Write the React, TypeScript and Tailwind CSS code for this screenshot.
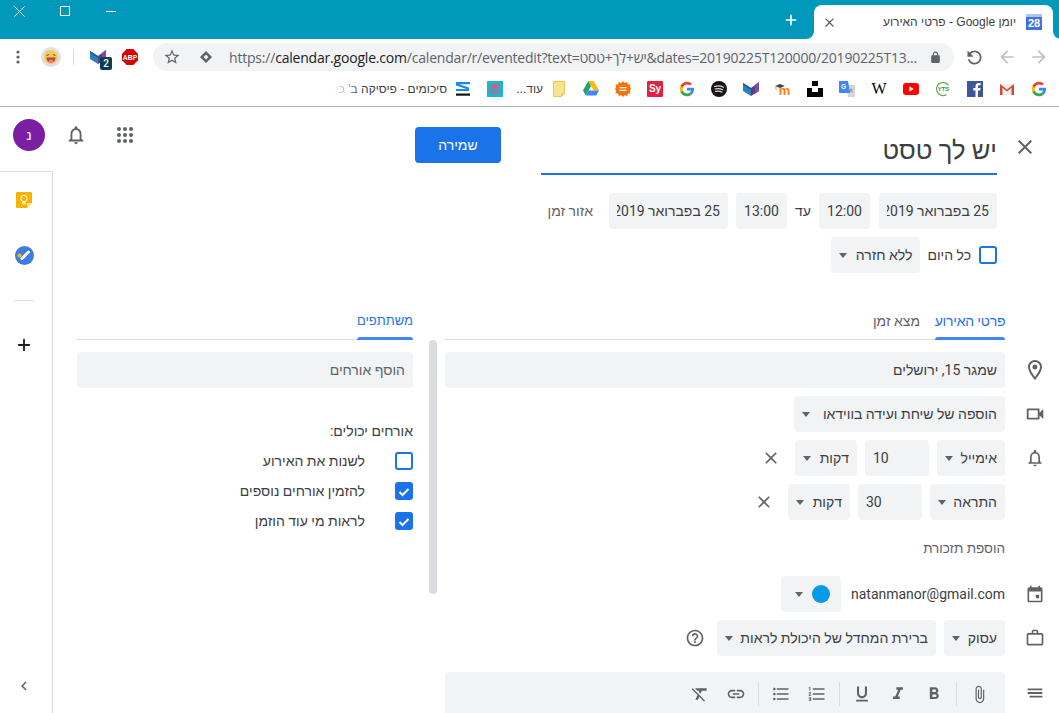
import React from "react";
import { Plus } from "lucide-react";

const P = {
  close: "M19 6.41L17.59 5 12 10.59 6.41 5 5 6.41 10.59 12 5 17.59 6.41 19 12 13.41 17.59 19 19 17.59 13.41 12z",
  place: "M12 2C8.13 2 5 5.13 5 9c0 5.25 7 13 7 13s7-7.75 7-13c0-3.87-3.13-7-7-7zM7 9c0-2.76 2.24-5 5-5s5 2.24 5 5c0 2.88-2.88 7.19-5 9.88C9.92 16.21 7 11.85 7 9zM12 6.5a2.5 2.5 0 1 0 0 5 2.5 2.5 0 0 0 0-5z",
  video: "M15 8v8H5V8h10m1-2H4c-.55 0-1 .45-1 1v10c0 .55.45 1 1 1h12c.55 0 1-.45 1-1v-3.5l4 4v-11l-4 4V7c0-.55-.45-1-1-1z",
  bell: "M12 22c1.1 0 2-.9 2-2h-4c0 1.1.89 2 2 2zm6-6v-5c0-3.07-1.64-5.64-4.5-6.32V4c0-.83-.67-1.5-1.5-1.5s-1.5.67-1.5 1.5v.68C7.63 5.36 6 7.92 6 11v5l-2 2v1h16v-1l-2-2zm-2 1H8v-6c0-2.48 1.51-4.5 4-4.5s4 2.02 4 4.5v6z",
  event: "M19 4h-1V2h-2v2H8V2H6v2H5c-1.1 0-2 .9-2 2v14c0 1.1.9 2 2 2h14c1.1 0 2-.9 2-2V6c0-1.1-.9-2-2-2zm0 16H5V9h14v11zM13 13h4v4h-4z",
  work: "M20 6h-4V4c0-1.11-.89-2-2-2h-4c-1.11 0-2 .89-2 2v2H4c-1.11 0-1.99.89-1.99 2L2 19c0 1.11.89 2 2 2h16c1.11 0 2-.89 2-2V8c0-1.11-.89-2-2-2zm-6 0h-4V4h4v2zm6 13H4V8h16v11z",
  notes: "M4 7h16v2H4zM4 11h16v2H4zM6 15h14v2H6z",
  attach: "M16.5 6v11.5c0 2.21-1.79 4-4 4s-4-1.79-4-4V5c0-1.38 1.12-2.5 2.5-2.5s2.5 1.12 2.5 2.5v10.5c0 .55-.45 1-1 1s-1-.45-1-1V6H10v9.5c0 1.38 1.12 2.5 2.5 2.5s2.5-1.12 2.5-2.5V5c0-2.21-1.79-4-4-4S7 2.79 7 5v12.5c0 3.04 2.46 5.5 5.5 5.5s5.5-2.46 5.5-5.5V6h-1.5z",
  bold: "M15.6 10.79c.97-.67 1.65-1.77 1.65-2.79 0-2.26-1.75-4-4-4H7v14h7.04c2.09 0 3.71-1.7 3.71-3.79 0-1.52-.86-2.82-2.15-3.42zM10 6.5h3c.83 0 1.5.67 1.5 1.5s-.67 1.5-1.5 1.5h-3v-3zm3.5 9H10v-3h3.5c.83 0 1.5.67 1.5 1.5s-.67 1.5-1.5 1.5z",
  italic: "M10 4v3h2.21l-3.42 8H6v3h8v-3h-2.21l3.42-8H18V4z",
  underline: "M12 17c3.31 0 6-2.69 6-6V3h-2.5v8c0 1.93-1.57 3.5-3.5 3.5S8.5 12.93 8.5 11V3H6v8c0 3.31 2.69 6 6 6zm-7 2v2h14v-2H5z",
  numbered: "M2 17h2v.5H3v1h1v.5H2v1h3v-4H2v1zm1-9h1V4H2v1h1v3zm-1 3h1.8L2 13.1v.9h3v-1H3.2L5 10.9V10H2v1zm5-6v2h14V5H7zm0 14h14v-2H7v2zm0-6h14v-2H7v2z",
  bulleted: "M4 10.5c-.83 0-1.5.67-1.5 1.5s.67 1.5 1.5 1.5 1.5-.67 1.5-1.5-.67-1.5-1.5-1.5zm0-6c-.83 0-1.5.67-1.5 1.5S3.17 7.5 4 7.5 5.5 6.83 5.5 6 4.83 4.5 4 4.5zm0 12c-.83 0-1.5.68-1.5 1.5s.68 1.5 1.5 1.5 1.5-.68 1.5-1.5-.67-1.5-1.5-1.5zM7 19h14v-2H7v2zm0-6h14v-2H7v2zm0-8v2h14V5H7z",
  link: "M3.9 12c0-1.71 1.39-3.1 3.1-3.1h4V7H7c-2.76 0-5 2.24-5 5s2.24 5 5 5h4v-1.9H7c-1.71 0-3.1-1.39-3.1-3.1zM8 13h8v-2H8v2zm9-6h-4v1.9h4c1.71 0 3.1 1.39 3.1 3.1s-1.39 3.1-3.1 3.1h-4V17h4c2.76 0 5-2.24 5-5s-2.24-5-5-5z",
  clear: "M3.27 5L2 6.27l6.97 6.97L6.5 19h3l1.57-3.66L16.73 21 18 19.73 3.55 5.27 3.27 5zM6 5v.18L8.82 8h2.4l-.72 1.68 2.1 2.1L14.21 8H20V5H6z",
  help: "M11 18h2v-2h-2v2zm1-16C6.48 2 2 6.48 2 12s4.48 10 10 10 10-4.48 10-10S17.52 2 12 2zm0 18c-4.41 0-8-3.59-8-8s3.59-8 8-8 8 3.59 8 8-3.59 8-8 8zm0-14c-2.21 0-4 1.79-4 4h2c0-1.1.9-2 2-2s2 .9 2 2c0 2-3 1.75-3 5h2c0-2.25 3-2.5 3-5 0-2.21-1.79-4-4-4z",
  reload: "M17.65 6.35C16.2 4.9 14.21 4 12 4c-4.42 0-7.99 3.58-7.99 8s3.57 8 7.99 8c3.73 0 6.84-2.55 7.73-6h-2.08c-.82 2.33-3.04 4-5.65 4-3.31 0-6-2.69-6-6s2.69-6 6-6c1.66 0 3.14.69 4.22 1.78L13 11h7V4l-2.35 2.35z",
  arrow: "M20 11H7.83l5.59-5.59L12 4l-8 8 8 8 1.41-1.41L7.83 13H20v-2z",
  star: "M22 9.24l-7.19-.62L12 2 9.19 8.63 2 9.24l5.46 4.73L5.82 21 12 17.27 18.18 21l-1.63-7.03L22 9.24zM12 15.4l-3.76 2.27 1-4.28-3.32-2.88 4.38-.38L12 6.1l1.71 4.04 4.38.38-3.32 2.88 1 4.28L12 15.4z",
  lock: "M18 8h-1V6c0-2.76-2.24-5-5-5S7 3.24 7 6v2H6c-1.1 0-2 .9-2 2v10c0 1.1.9 2 2 2h12c1.1 0 2-.9 2-2V10c0-1.1-.9-2-2-2zM9 6c0-1.66 1.34-3 3-3s3 1.34 3 3v2H9V6z",
  chevron: "M15.41 7.41L14 6l-6 6 6 6 1.41-1.41L10.83 12z",
};

const Ic = ({ d, size = 24, className = "" }: { d: string; size?: number; className?: string }) => (
  <svg width={size} height={size} viewBox="0 0 24 24" className={`shrink-0 fill-current ${className}`}>
    <path d={d} />
  </svg>
);

const Caret = () => <span className="block h-0 w-0 shrink-0 border-x-[4px] border-t-[5px] border-x-transparent border-t-[#5f6368]" />;

const Select = ({ label, w }: { label: string; w: string }) => (
  <div className={`flex h-9 items-center justify-between rounded bg-[#f1f3f4] px-2 text-sm text-[#3c4043] ${w}`}>
    <span className="whitespace-nowrap">{label}</span>
    <Caret />
  </div>
);

const Chip = ({ label, w }: { label: string; w: string }) => (
  <div className={`flex h-9 items-center rounded bg-[#f1f3f4] px-2 text-sm text-[#3c4043] ${w}`}>
    <span className="overflow-hidden whitespace-nowrap">{label}</span>
  </div>
);

const Check = ({ on }: { on?: boolean }) => (
  <span className={`flex h-[18px] w-[18px] shrink-0 items-center justify-center rounded-[3px] border-2 border-[#1a73e8] ${on ? "bg-[#1a73e8]" : ""}`}>
    {on && (
      <svg width="12" height="12" viewBox="0 0 12 12" className="mt-0.5">
        <path d="M1.5 6l3 3 6-6" fill="none" stroke="white" strokeWidth="2" />
      </svg>
    )}
  </span>
);

const Row = ({ icon, size = 20, children, className = "" }: { icon?: string; size?: number; children: React.ReactNode; className?: string }) => (
  <div className={`flex h-9 items-center ${className}`}>
    <div className="flex w-[54px] shrink-0 pr-3 text-[#5f6368]">
      <span className="flex w-6 justify-center">{icon && <Ic d={icon} size={size} />}</span>
    </div>
    {children}
  </div>
);

const Sep = () => <span className="mx-1 h-6 w-px shrink-0 bg-[#dadce0]" />;

const Tool = ({ d, size = 20 }: { d: string; size?: number }) => (
  <span className="flex w-9 shrink-0 justify-center text-[#5f6368]">
    <Ic d={d} size={size} />
  </span>
);

/* favicons */
const GLogo = () => (
  <svg width="16" height="16" viewBox="0 0 48 48">
    <path fill="#4285f4" d="M45 24.5c0-1.6-.1-3.1-.4-4.5H24v8.5h11.8c-.5 2.8-2 5.100-4.400 6.700l7 5.400C42.500 36.800 45 31.200 45 24.500z" />
    <path fill="#34a853" d="M24 46c5.900 0 10.900-2 14.400-5.400l-7-5.400c-2 1.300-4.500 2.100-7.400 2.100-5.700 0-10.500-3.800-12.200-9H4.500v5.600C8.100 41 15.500 46 24 46z" />
    <path fill="#fbbc05" d="M11.800 28.300c-.9-2.700-.9-5.600 0-8.300v-5.600H4.500c-3 6-3 13.500 0 19.500l7.300-5.600z" />
    <path fill="#ea4335" d="M24 10.700c3.200 0 6.100 1.100 8.300 3.300l6.200-6.200C34.900 4.300 29.900 2 24 2 15.500 2 8.100 7 4.500 14.400l7.300 5.600c1.700-5.500 6.500-9.300 12.200-9.300z" />
  </svg>
);

const BookLogo = ({ size = 16 }: { size?: number }) => (
  <svg width={size} height={size} viewBox="0 0 16 16">
    <path fill="#2f7fb8" d="M0 2l8 5v8L0 10z" />
    <path fill="#1a5f96" d="M0 2v2l8 5V7z" />
    <path fill="#5a3d8f" d="M16 1L8 7v8l8-5z" />
    <path fill="#7b4fa8" d="M16 1l-4 3v9l4-3z" />
  </svg>
);

const Fav = ({ children }: { children: React.ReactNode }) => (
  <span className="flex h-full w-8 shrink-0 items-center justify-center">{children}</span>
);

const Bookmarks = () => (
  <div dir="rtl" className="flex h-9 items-center border-b border-[#b4b4b4] pr-1 font-['Liberation_Sans',sans-serif] text-xs text-[#3c4043]">
    <Fav><GLogo /></Fav>
    <Fav>
      <svg width="16" height="16" viewBox="0 0 16 16">
        <path fill="#eee" d="M1 3h14v11H1z" />
        <path fill="#d14836" d="M1 3l7 5.500L15 3v11h-2.500V6.800L8 10.500 3.500 6.800V14H1z" />
      </svg>
    </Fav>
    <Fav>
      <svg width="16" height="16" viewBox="0 0 16 16">
        <rect width="16" height="16" fill="#3b5998" />
        <path fill="#fff" d="M11 16V9.500h2.200l.3-2.500H11V5.500c0-.7.2-1.200 1.300-1.200h1.300V2.100C13.400 2 12.600 2 11.700 2 9.800 2 8.500 3.100 8.500 5.200V7H6.300v2.500h2.200V16z" />
      </svg>
    </Fav>
    <Fav>
      <svg width="16" height="16" viewBox="0 0 16 16">
        <circle cx="8" cy="8" r="6.500" fill="none" stroke="#6aa84f" strokeWidth="1.200" strokeDasharray="24 10" transform="rotate(110 8 8)" />
        <text x="8.500" y="10" fontSize="6" fontWeight="700" textAnchor="middle" fill="#4e8a3a" fontFamily="Liberation Sans">YTS</text>
      </svg>
    </Fav>
    <Fav>
      <svg width="16" height="12" viewBox="0 0 16 12">
        <rect width="16" height="12" rx="3" fill="#f00" />
        <path d="M6.300 3.300l4.500 2.700-4.500 2.700z" fill="white" />
      </svg>
    </Fav>
    <Fav><span className="font-['Liberation_Serif',serif] text-base font-normal text-black" dir="ltr">W</span></Fav>
    <Fav>
      <svg width="16" height="16" viewBox="0 0 16 16">
        <path fill="#d5d5d5" d="M7 4h9v12H9z" />
        <path fill="#8a9bb5" d="M12 7l.7 1.600 1.600.1-1.200 1.100.4 1.700-1.500-.9-1.500.9.400-1.700L9.700 8.700l1.600-.1z" />
        <path fill="#4285f4" d="M0 0h9l2 12H1a1 1 0 0 1-1-1z" />
        <text x="4.500" y="8" fontSize="6.500" fontWeight="700" textAnchor="middle" fill="white" fontFamily="Liberation Sans">G</text>
      </svg>
    </Fav>
    <Fav>
      <svg width="16" height="16" viewBox="0 0 16 16">
        <path d="M5 0h6v5H5zM0 7h5v4h6V7h5v9H0z" fill="#000" />
      </svg>
    </Fav>
    <Fav>
      <svg width="16" height="16" viewBox="0 0 16 16">
        <path d="M0 5l5-2 5 2-5 2z" fill="#444" />
        <path d="M1 5v4" stroke="#f98012" strokeWidth=".8" />
        <text x="9.500" y="14" fontSize="13" fontWeight="700" textAnchor="middle" fill="#f98012" fontFamily="Liberation Sans">m</text>
      </svg>
    </Fav>
    <Fav><BookLogo /></Fav>
    <Fav>
      <svg width="16" height="16" viewBox="0 0 16 16">
        <circle cx="8" cy="8" r="8" fill="#191414" />
        <path d="M3.500 5.500c3-.9 6.200-.7 9 .7M4 8c2.500-.7 5.300-.5 7.700.7M4.500 10.400c2.100-.5 4.400-.4 6.400.6" fill="none" stroke="#ddd" strokeWidth="1.200" strokeLinecap="round" />
      </svg>
    </Fav>
    <Fav><GLogo /></Fav>
    <Fav>
      <span dir="ltr" className="flex h-4 w-4 items-center justify-center rounded-[1px] bg-[#e3213f] text-[10px] font-bold text-white">Sy</span>
    </Fav>
    <Fav>
      <svg width="16" height="16" viewBox="0 0 16 16">
        <path fill="#f4730b" d="M8 0l1.800 2 2.400-1.200.6 2.600 2.700.2-.6 2.600L16 8l-1.100 1.800.6 2.600-2.700.2-.6 2.600-2.400-1.200L8 16l-1.800-2-2.400 1.200-.6-2.600-2.700-.2.6-2.600L0 8l1.100-1.800-.6-2.600 2.700-.2.6-2.600L6.200 2z" />
        <path fill="#fff" d="M4.500 6h7v1.300h-7zM4.500 8.700h7V10h-7z" />
      </svg>
    </Fav>
    <Fav>
      <svg width="16" height="15" viewBox="0 0 16 15">
        <path fill="#fbbc04" d="M5.300 0h5.400l5.300 9.500h-5.400z" />
        <path fill="#1fa463" d="M5.300 0L0 9.500 2.700 14.500 8 5z" />
        <path fill="#4285f4" d="M5.400 9.500H16l-2.700 5H2.700z" />
      </svg>
    </Fav>
    <Fav>
      <svg width="12" height="16" viewBox="0 0 12 16">
        <path d="M.5.500h11v12l-3 3h-8z" fill="#fde293" stroke="#f0c64a" />
        <path d="M8.500 15.500v-3h3" fill="none" stroke="#f0c64a" />
      </svg>
    </Fav>
    <span className="flex w-8 shrink-0 text-[#3c4043]">עוד...</span>
    <Fav>
      <svg width="16" height="16" viewBox="0 0 16 16">
        <rect width="16" height="16" fill="#1cb5cf" />
        <path fill="#ef5078" d="M8 2.500l5 2.500-5 2.500L3 5zM3 7l5 2.500L13 7v1.300l-5 2.500-5-2.500zM3 9.800l5 2.500 5-2.500v1.300l-5 2.500-5-2.500z" />
      </svg>
    </Fav>
    <Fav>
      <svg width="16" height="16" viewBox="0 0 16 16">
        <path fill="#1e88e5" d="M1 1h14v2.200H4L14 6.500V10H1V8h10.500L1 4.500z" />
        <rect x="1" y="12.500" width="14" height="2.200" fill="#111" />
      </svg>
    </Fav>
    <div className="relative w-[113px] shrink-0 overflow-hidden whitespace-nowrap">
      סיכומים - פיסיקה ב' כיתה י"א
      <span className="absolute inset-y-0 left-0 w-7 bg-gradient-to-r from-white to-transparent" />
    </div>
  </div>
);

const TopChrome = () => (
  <>
    <div className="flex h-[39px] items-start bg-[#0099bc]">
      <div className="-ml-1 flex h-[22px] text-white">
        <span className="flex w-[46px] items-center justify-center">
          <svg width="11" height="11" viewBox="0 0 11 11"><path d="M.5.500l10 10M10.500.500l-10 10" stroke="white" /></svg>
        </span>
        <span className="flex w-[46px] items-center justify-center">
          <span className="block h-[10px] w-[10px] border border-white" />
        </span>
        <span className="flex w-[46px] items-center justify-center">
          <span className="block h-px w-[10px] bg-white" />
        </span>
      </div>
      <div className="ml-auto flex h-full items-center pr-[6px]">
        <Plus size={16} strokeWidth={2.500} className="mr-[15px] text-white" />
        <div dir="rtl" className="relative mt-[5px] flex h-[34px] w-[239px] items-center rounded-t-lg bg-white pr-[11px] pl-2 font-['Liberation_Sans',sans-serif] text-xs text-[#3c4043]">
          <span className="absolute bottom-0 -left-2 h-2 w-2 bg-white" />
          <span className="absolute bottom-0 -left-2 h-2 w-2 rounded-br-lg bg-[#0099bc]" />
          <span className="absolute -right-2 bottom-0 h-2 w-2 bg-white" />
          <span className="absolute -right-2 bottom-0 h-2 w-2 rounded-bl-lg bg-[#0099bc]" />
          <span dir="ltr" className="relative flex h-4 w-4 shrink-0 items-center justify-center overflow-hidden bg-[#3f73d9] pt-[3px] text-[11px] font-bold text-white">
            28
            <span className="absolute inset-x-0 top-0 h-[3px] bg-[#aec6ef]" />
          </span>
          <span className="mr-[10px] whitespace-nowrap">יומן Google - פרטי האירוע</span>
          <Ic d={P.close} size={15} className="mr-auto text-[#5f6368]" />
        </div>
      </div>
    </div>
    <div className="flex h-8 items-center bg-white pt-1 text-[#5f6368]">
      <span className="flex w-9 justify-center">
        <svg width="4" height="14" viewBox="0 0 4 14" className="fill-current"><circle cx="2" cy="2" r="1.600" /><circle cx="2" cy="7" r="1.600" /><circle cx="2" cy="12" r="1.600" /></svg>
      </span>
      <svg width="20" height="20" viewBox="0 0 20 20" className="ml-[5px]">
        <circle cx="10" cy="10" r="10" fill="#e0e0e0" />
        <circle cx="10" cy="10" r="7" fill="#f7c95c" />
        <path d="M5.500 8.500l2.500-1M14.500 8.500l-2.500-1" stroke="#8a6414" strokeWidth="1.200" />
        <path d="M5.500 10.500h9c0 3-2 5-4.500 5s-4.500-2-4.500-5z" fill="#b3433c" />
        <path d="M8 12.500h4v3H8z" fill="#ee7a8a" />
      </svg>
      <span className="ml-[12px] h-4 w-px bg-[#dadce0]" />
      <div className="relative ml-4 h-4 w-4">
        <BookLogo />
        <span className="absolute top-[8px] left-[10px] flex h-[13px] w-3 items-center justify-center rounded-[2px] bg-[#0d3c52] text-[10px] font-medium text-white">2</span>
      </div>
      <svg width="16" height="16" viewBox="0 0 16 16" className="ml-[16px]">
        <path fill="#d50000" d="M4.700 0h6.600L16 4.700v6.600L11.300 16H4.700L0 11.300V4.700z" />
        <text x="8" y="10.500" fontSize="6.800" fontWeight="700" textAnchor="middle" fill="white" fontFamily="Liberation Sans">ABP</text>
      </svg>
      <div className="ml-[15px] flex h-7 w-[801px] shrink-0 items-center rounded-full bg-[#f1f3f4] pr-3">
        <Ic d={P.star} size={18} className="ml-[10px]" />
        <svg width="14" height="14" viewBox="0 0 14 14" className="ml-[18px] fill-current">
          <path d="M7 1l6 6-6 6-6-6zM7 4.500L4.500 7 7 9.500 9.500 7z" />
        </svg>
        <span className="ml-4 font-['Open_Sans','Liberation_Sans',sans-serif] text-[14px] tracking-[-0.2px] whitespace-nowrap">
          https://<span className="text-[#202124]">calendar.google.com</span>/calendar/r/eventedit?text=יש+לך+טסט&dates=20190225T120000/20190225T13...
        </span>
        <Ic d={P.lock} size={13} className="ml-auto" />
      </div>
      <Ic d={P.reload} size={21} className="ml-[10px] -scale-x-100 text-[#5f6368]" />
      <Ic d={P.arrow} size={20} className="ml-[12px] text-[#bdc1c6]" />
      <Ic d={P.arrow} size={20} className="ml-[12px] -scale-x-100 text-[#bdc1c6]" />
    </div>
    <Bookmarks />
  </>
);

const Sidebar = () => (
  <div className="flex w-[53px] shrink-0 flex-col">
    <div className="h-16 pt-3 pl-[13px]">
      <span className="flex h-8 w-8 items-center justify-center rounded-full bg-[#7b1fa2] text-sm text-white">נ</span>
    </div>
    <div className="flex flex-1 flex-col items-center border-t border-r border-[#dadce0] pr-1 pt-[20px]">
      <svg width="16" height="16" viewBox="0 0 16 16">
        <path fill="#f4b400" d="M1 0h14a1 1 0 0 1 1 1v10l-5 5H1a1 1 0 0 1-1-1V1a1 1 0 0 1 1-1z" />
        <path fill="#fbe29f" d="M16 11h-5v5z" />
        <circle cx="8" cy="6.500" r="3.200" fill="none" stroke="#fff" />
        <path d="M6.500 10.500h3v1.500h-3z" fill="none" stroke="#fff" strokeWidth=".8" />
      </svg>
      <svg width="19" height="19" viewBox="0 0 19 19" className="mt-[38px]">
        <circle cx="9.500" cy="9.500" r="9.500" fill="#3b7de0" />
        <path d="M7 12.500l6.500-6.500" stroke="white" strokeWidth="3" strokeLinecap="round" />
        <circle cx="4.500" cy="9.500" r="2" fill="#fbbc04" />
      </svg>
      <span className="mt-[35px] h-px w-5 bg-[#dadce0]" />
      <Plus size={18} strokeWidth={2.500} className="mt-[35px] text-[#202124]" />
      <Ic d={P.chevron} size={18} className="mt-auto mb-[18px] text-[#5f6368]" />
    </div>
  </div>
);

const Details = () => (
  <div className="w-[614px] shrink-0">
    <div className="mr-[54px] flex h-[37px] items-start border-b border-[#dadce0] text-[14px]">
      <div className="relative flex h-9 w-[70px] items-center justify-center tracking-[-0.2px] whitespace-nowrap text-[#1a73e8]">
        פרטי האירוע
        <span className="absolute inset-x-0 -bottom-px h-[3px] rounded-t-[3px] bg-[#4285f4]" />
      </div>
      <div className="mr-[15px] flex h-9 items-center whitespace-nowrap text-[#5f6368]">מצא זמן</div>
    </div>
    <Row icon={P.place} size={24} className="mt-3">
      <div className="flex h-9 flex-1 items-center rounded bg-[#f1f3f4] px-2 text-sm text-[#3c4043]">שמגר 15, ירושלים</div>
    </Row>
    <Row icon={P.video} size={22} className="mt-2">
      <Select label="הוספה של שיחת ועידה בווידאו" w="w-[211px]" />
    </Row>
    <Row icon={P.bell} className="mt-2">
      <Select label="אימייל" w="w-[68px]" />
      <Chip label="10" w="mr-2 w-16 justify-end" />
      <Select label="דקות" w="mr-2 w-[62px]" />
      <Ic d={P.close} size={20} className="mr-[14px] text-[#5f6368]" />
    </Row>
    <Row className="mt-2">
      <Select label="התראה" w="w-[75px]" />
      <Chip label="30" w="mr-2 w-16 justify-end" />
      <Select label="דקות" w="mr-2 w-[62px]" />
      <Ic d={P.close} size={20} className="mr-[14px] text-[#5f6368]" />
    </Row>
    <Row className="mt-[10px]">
      <span className="text-[13.5px] text-[#5f6368]">הוספת תזכורת</span>
    </Row>
    <Row icon={P.event} className="mt-[10px]">
      <span className="text-sm text-[#3c4043]">natanmanor@gmail.com</span>
      <div className="mr-[10px] flex h-9 w-[60px] items-center rounded bg-[#f1f3f4] pr-[11px] pl-[14px]">
        <span className="h-[18px] w-[18px] rounded-full bg-[#039be5]" />
        <span className="mr-auto"><Caret /></span>
      </div>
    </Row>
    <Row icon={P.work} className="mt-2">
      <Select label="עסוק" w="w-[61px]" />
      <Select label="ברירת המחדל של היכולת לראות" w="mr-2 w-[219px]" />
      <Ic d={P.help} size={20} className="mr-3 text-[#5f6368]" />
    </Row>
    <Row icon={P.notes} size={22} className="mt-4 !h-[41px]">
      <div className="flex h-[41px] flex-1 items-center rounded-t bg-[#f1f3f4] pt-[3px] pr-2">
        <Tool d={P.attach} size={19} />
        <Sep />
        <Tool d={P.bold} />
        <Tool d={P.italic} />
        <Tool d={P.underline} />
        <Sep />
        <Tool d={P.numbered} />
        <Tool d={P.bulleted} />
        <Sep />
        <Tool d={P.link} />
        <Tool d={P.clear} />
      </div>
    </Row>
  </div>
);

const Guests = () => (
  <div className="w-[336px] shrink-0 text-sm text-[#3c4043]">
    <div className="flex h-[37px] items-start border-b border-[#dadce0] text-[13px]">
      <div className="relative flex h-9 items-center whitespace-nowrap text-[#1a73e8]">
        משתתפים
        <span className="absolute inset-x-0 -bottom-px h-[3px] rounded-t-[3px] bg-[#4285f4]" />
      </div>
    </div>
    <div className="mt-3 flex h-9 items-center rounded bg-[#f1f3f4] px-2 text-[#5f6368]">הוסף אורחים</div>
    <div className="mt-8 leading-[22px]">אורחים יכולים:</div>
    {[
      ["לשנות את האירוע", false],
      ["להזמין אורחים נוספים", true],
      ["לראות מי עוד הוזמן", true],
    ].map(([label, on], i) => (
      <div key={i} className={`flex h-[30px] items-center ${i === 0 ? "mt-[4px]" : ""}`}>
        <Check on={on as boolean} />
        <span className="mr-[30px]">{label as string}</span>
      </div>
    ))}
  </div>
);

const Content = () => (
  <div dir="rtl" className="flex min-w-0 flex-1 flex-col">
    <div className="flex h-[68px] shrink-0 items-start">
      <div className="flex w-[62px] shrink-0 pt-7 pr-[22px] text-[#5f6368]">
        <Ic d={P.close} />
      </div>
      <div className="flex h-[68px] w-[456px] shrink-0 items-end border-b-2 border-[#1a73e8] pb-[5px] text-[25.5px] leading-9 text-[#3c4043]">יש לך טסט</div>
      <button className="mt-5 mr-10 h-9 w-[86px] rounded bg-[#1a73e8] text-sm text-white">שמירה</button>
      <div className="mt-4 mr-auto flex items-center pl-3 text-[#5f6368]">
        <svg width="24" height="24" viewBox="0 0 24 24" className="fill-current">
          {[6, 12, 18].flatMap((y) => [6, 12, 18].map((x) => <circle key={`${x}-${y}`} cx={x} cy={y} r="2" />))}
        </svg>
        <Ic d={P.bell} size={22} className="mr-[26px]" />
      </div>
    </div>

    <div className="mt-[18px] mr-[62px] flex items-center text-sm text-[#3c4043]">
      <Chip label="25 בפברואר 2019" w="w-[118px]" />
      <Chip label="12:00" w="mr-[9px] w-[51px] justify-center" />
      <span className="mr-2 w-6 text-right">עד</span>
      <Chip label="13:00" w="w-[51px] justify-center" />
      <Chip label="25 בפברואר 2019" w="mr-2 w-[119px]" />
      <span className="mr-4 text-sm text-[#5f6368]">אזור זמן</span>
    </div>
    <div className="mt-2 mr-[62px] flex items-center text-sm text-[#3c4043]">
      <Check />
      <span className="mr-2">כל היום</span>
      <Select label="ללא חזרה" w="mr-[7px] w-[89px]" />
    </div>

    <div className="mt-[30px] flex items-start">
      <Details />
      <div className="mt-[37px] mr-2 h-[254px] w-2 shrink-0 rounded bg-[#dadce0]" />
      <div className="mr-4"><Guests /></div>
    </div>
  </div>
);

export default function App() {
  return (
    <div className="flex h-[713px] w-[1059px] flex-col overflow-hidden bg-white font-['Roboto','Liberation_Sans',sans-serif]">
      <TopChrome />
      <div className="flex min-h-0 flex-1">
        <Sidebar />
        <Content />
      </div>
    </div>
  );
}
